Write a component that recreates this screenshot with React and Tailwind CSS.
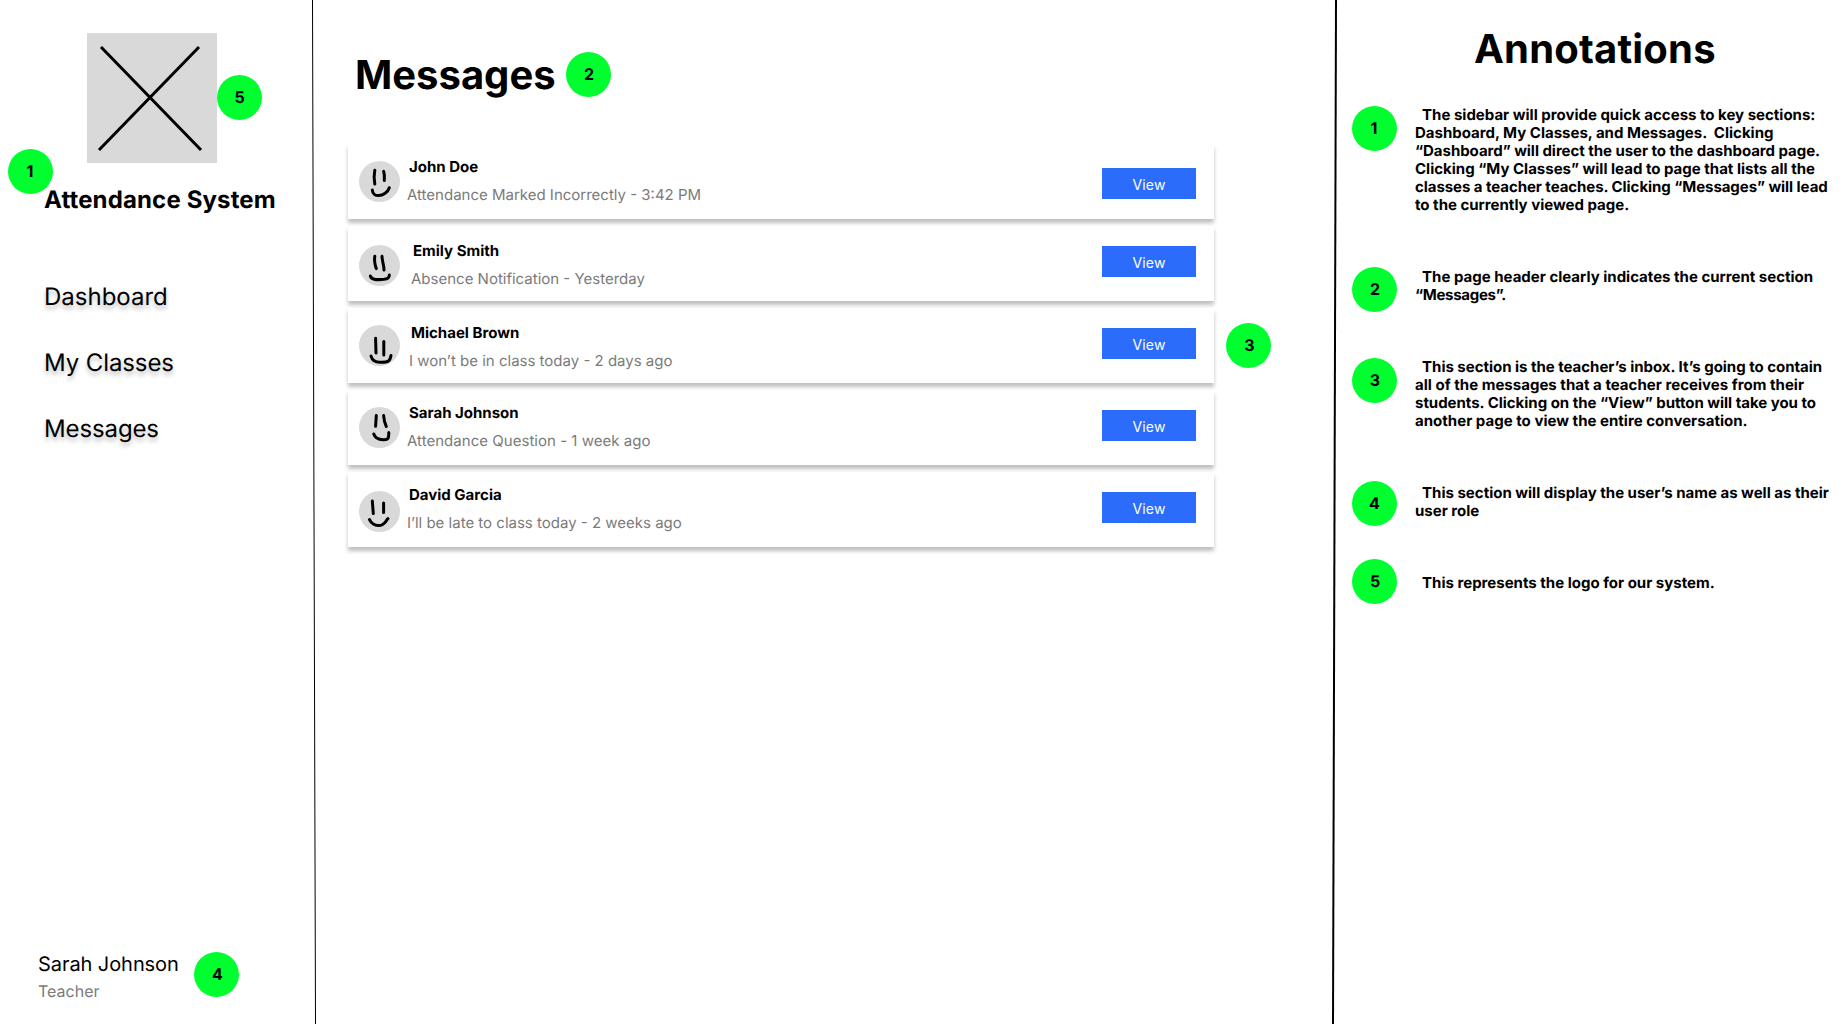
const badgeBase =
  "size-[45px] shrink-0 rounded-full bg-[#00ff2f] flex items-center justify-center text-[16px] leading-[19px] font-bold";

function Badge({ n, className = "", shift = "" }) {
  return (
    <div className={`${badgeBase} ${className}`}>
      <span className={shift}>{n}</span>
    </div>
  );
}

const messages = [
  {
    name: "John Doe",
    text: "Attendance Marked Incorrectly - 3:42 PM",
    avatar: "mt-[17px]",
    body: "mt-[14px] ml-[7px]",
    button: "mt-[24px]",
    face: ["M15.8 9.3C15 13 15 18 15.8 23", "M24.6 10.3C25.6 13 25.6 16 25.3 19.5", "M13.3 29C13.5 33 16.5 34.6 19.5 34.6C24 34.6 29 31 30.3 26.7"],
  },
  {
    name: "Emily Smith",
    text: "Absence Notification - Yesterday",
    avatar: "mt-[19px]",
    body: "mt-[16px] ml-[11px]",
    button: "mt-[20px]",
    face: ["M15.8 11.3C15 16 16 20 17.3 23.6", "M23 11.3C23 16 25 20 25 25", "M11.3 31C13 36 20 34.5 25 34.3C29 34 30.5 32 30.3 30"],
  },
  {
    name: "Michael Brown",
    text: "I won’t be in class today - 2 days ago",
    avatar: "mt-[17px]",
    body: "mt-[16px] ml-[9px]",
    button: "mt-[20px]",
    face: ["M16.6 13.3L17 28", "M24.8 16.6V30", "M12 31C13 35 16 37.3 21 37.3C30 37.6 31 36 32 30.5"],
  },
  {
    name: "Sarah Johnson",
    text: "Attendance Question - 1 week ago",
    tracking: "tracking-[0.03px]",
    avatar: "mt-[17px]",
    body: "mt-[14px] ml-[7px]",
    button: "mt-[20px]",
    face: ["M17.3 8.6L16.6 19.3", "M24.6 8.6C25 13 26 17 27.3 19.5", "M14.8 27C16 31 20 32.6 24 32.8C29.5 33.3 29.8 31 29.8 25.5"],
  },
  {
    name: "David Garcia",
    text: "I’ll be late to class today - 2 weeks ago",
    avatar: "mt-[19px]",
    body: "mt-[14px] ml-[7px]",
    button: "mt-[20px]",
    face: ["M13.3 10L14.3 22.6", "M24.6 12V21.5", "M10.5 28.6C12 32 16 34.6 20 34.6C25 34.6 26 31 29 27.6"],
  },
];

function MessageRow({ m }) {
  return (
    <div className="flex h-[75px] w-[866px] items-start bg-white pl-[11px] pr-[18px] shadow-[0_4px_4px_rgba(0,0,0,0.25)]">
      <div className={`size-[41px] shrink-0 rounded-full bg-[#d9d9d9] ${m.avatar}`}>
        <svg viewBox="0 0 41 41" className="size-[41px] overflow-visible" fill="none" stroke="black" strokeWidth="3" strokeLinecap="round">
          {m.face.map((d) => (
            <path key={d} d={d} />
          ))}
        </svg>
      </div>
      <div className={`flex-1 text-[15px] leading-[18px] ${m.body}`}>
        <p className="ml-[2px] font-bold">{m.name}</p>
        <p className={`mt-[10px] text-[#7b7b7b] ${m.tracking ?? ""}`}>{m.text}</p>
      </div>
      <button className={`h-[31px] w-[94px] bg-[#2b6cfb] pt-px text-[14px] leading-[17px] tracking-[0.2px] text-white ${m.button}`}>View</button>
    </div>
  );
}

const notes = [
  {
    n: 1,
    text: "",
    shift: "-ml-px",
    lines: [
      ["  The sidebar will provide quick access to key sections:"],
      ["Dashboard, My Classes, and Messages.  Clicking"],
      ["“Dashboard” will direct the user to the dashboard page.", "tracking-[-0.04px]"],
      ["Clicking “My Classes” will lead to page that lists all the"],
      ["classes a teacher teaches. Clicking “Messages” will lead", "tracking-[-0.06px]"],
      ["to the currently viewed page."],
    ],
    row: "h-[161px]",
  },
  {
    n: 2,
    text: "mt-[1px]",
    shift: "ml-px",
    lines: [["  The page header clearly indicates the current section"], ["“Messages”.", "tracking-[-0.3px]"]],
    row: "h-[91px]",
  },
  {
    n: 3,
    text: "",
    shift: "ml-px -mt-px",
    lines: [
      ["  This section is the teacher’s inbox. It’s going to contain", "tracking-[-0.02px]"],
      ["all of the messages that a teacher receives from their", "tracking-[0.02px]"],
      ["students. Clicking on the “View” button will take you to", "tracking-[-0.02px]"],
      ["another page to view the entire conversation.", "tracking-[0.02px]"],
    ],
    row: "h-[123px]",
  },
  {
    n: 4,
    text: "mt-[3px]",
    lines: [["  This section will display the user’s name as well as their"], ["user role"]],
    row: "h-[78px]",
  },
  { n: 5, text: "mt-[15px]", shift: "ml-px", lines: [["  This represents the logo for our system."]], row: "h-[45px]" },
];

export default function App() {
  return (
    <div className="flex h-[1024px] w-[1848px] overflow-hidden bg-white font-['Inter',sans-serif] text-black [text-rendering:geometricPrecision]">
      <aside className="relative flex w-[311px] shrink-0 flex-col">
        <div className="mt-[33px] ml-[87px] size-[130px] bg-[#d9d9d9]">
          <svg viewBox="0 0 130 130" className="size-[130px]" stroke="black" strokeWidth="3">
            <path d="M14 14L114 117M112 14L12 117" />
          </svg>
        </div>
        <Badge n="5" className="absolute top-[75px] left-[217px]" />
        <Badge n="1" className="absolute top-[149px] left-[8px]" shift="-ml-px" />
        <h2 className="relative mt-[22px] ml-[44px] text-[24px] leading-[29px] font-bold tracking-[0.14px] whitespace-nowrap">Attendance System</h2>
        <nav className="mt-[68px] ml-[44px] flex flex-col gap-[37px] text-[24px] leading-[29px] [text-shadow:0_4px_4px_rgba(0,0,0,0.25)]">
          <a>Dashboard</a>
          <a className="tracking-[-0.1px]">My Classes</a>
          <a className="tracking-[-0.12px]">Messages</a>
        </nav>
        <div className="mt-auto mb-[23px] ml-[38px] flex items-start">
          <div className="w-[156px] whitespace-nowrap">
            <p className="text-[20px] leading-[24px] tracking-[-0.07px]">Sarah Johnson</p>
            <p className="mt-[6px] text-[16px] leading-[19px] text-[#7b7b7b]">Teacher</p>
          </div>
          <Badge n="4" shift="ml-0.5" />
        </div>
      </aside>

      <svg viewBox="0 0 6 1024" className="h-[1024px] w-[6px] shrink-0" stroke="black" strokeWidth="1">
        <path d="M1.5 0L4.5 1024" />
      </svg>

      <main className="w-[1014px] shrink-0 pl-[31px]">
        <div className="mt-[50px] ml-[7px] flex items-start">
          <h1 className="mt-px w-[211px] text-[40px] leading-[48px] font-bold">Messages</h1>
          <Badge n="2" className="mt-[2px]" shift="ml-px" />
        </div>
        <div className="mt-[45px] flex">
          <div className="flex flex-col gap-[7px]">
            {messages.map((m) => (
              <MessageRow key={m.name} m={m} />
            ))}
          </div>
          <Badge n="3" className="mt-[179px] ml-[12px]" shift="ml-0.5 -mt-px" />
        </div>
      </main>

      <svg viewBox="0 0 8 1024" className="h-[1024px] w-[8px] shrink-0" stroke="black" strokeWidth="2">
        <path d="M5 0L2 1024" />
      </svg>

      <section className="flex-1 pl-[13px]">
        <h1 className="mt-[25px] ml-[122px] text-[40px] leading-[48px] font-bold tracking-[0.2px]">Annotations</h1>
        <div className="mt-[33px]">
          {notes.map((note) => (
            <div key={note.n} className={`flex items-start ${note.row}`}>
              <Badge n={note.n} shift={note.shift} />
              <div className={`ml-[18px] text-[15px] leading-[18px] font-bold whitespace-pre ${note.text}`}>
                {note.lines.map(([line, tracking = ""]) => (
                  <p key={line} className={tracking}>
                    {line}
                  </p>
                ))}
              </div>
            </div>
          ))}
        </div>
      </section>
    </div>
  );
}
